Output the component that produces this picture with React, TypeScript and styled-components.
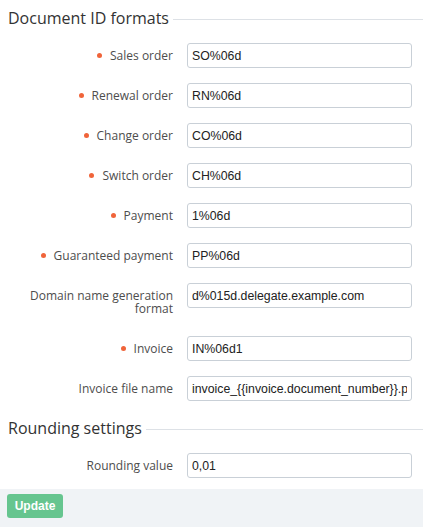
import * as React from "react";
import styled, {createGlobalStyle} from "styled-components";

const GlobalStyle = createGlobalStyle`
    html, body {
      margin: 0;
      padding: 0;
      background: #fff;
    }
    body {
      font-family: "Open Sans", "Liberation Sans", sans-serif;
    }
`;

const Page = styled.div`
    width: 423px;
    min-height: 527px;
    display: flex;
    flex-direction: column;
    background: #fff;
`;

const Content = styled.div`
    padding: 8px 11px 11px 8px;
`;

const Section = styled.section<{ first?: boolean }>`
    margin-top: ${p => p.first ? 0 : 17}px;
`;

const SectionTitle = styled.div`
    display: flex;
    align-items: center;
    height: 20px;
    margin-bottom: 15px;
    margin-right: -11px;
    font-size: 16px;
    color: #333;
    white-space: nowrap;
    &::after {
      content: "";
      flex: 1;
      height: 1px;
      margin-left: 4px;
      margin-top: 3px;
      background: #dde1e6;
    }
`;

const Form = styled.div`
    display: grid;
    grid-template-columns: 165px 225px;
    column-gap: 14px;
    row-gap: 15px;
`;

const Label = styled.label<{ required?: boolean }>`
    padding: 6px 0;
    font-size: 12px;
    line-height: 13px;
    color: #4d4d4d;
    text-align: right;
    &::before {
      content: "";
      display: ${p => p.required ? "inline-block" : "none"};
      width: 5px;
      height: 5px;
      margin-right: 8px;
      vertical-align: 2px;
      border-radius: 50%;
      background: #f0643a;
    }
`;

const Input = styled.input`
    display: block;
    box-sizing: border-box;
    width: 225px;
    height: 25px;
    padding: 0 4px;
    border: 1px solid #c9d0d7;
    border-radius: 3px;
    font-family: "Liberation Sans", Arial, sans-serif;
    font-size: 12.3px;
    color: #222;
    background: #fff;
    outline: none;
`;

const Footer = styled.div`
    flex: 1;
    padding: 5px 7px;
    background: #f0f3f6;
`;

const Button = styled.button`
    display: block;
    width: 56px;
    height: 24px;
    padding: 0;
    border: none;
    border-radius: 3px;
    background: #66c58f;
    color: #fff;
    font-family: "Liberation Sans", Arial, sans-serif;
    font-size: 12px;
    font-weight: bold;
`;

interface Field {
  label: string;
  value: string;
  required?: boolean;
}

const idFormats: Field[] = [
  {label: "Sales order", value: "SO%06d", required: true},
  {label: "Renewal order", value: "RN%06d", required: true},
  {label: "Change order", value: "CO%06d", required: true},
  {label: "Switch order", value: "CH%06d", required: true},
  {label: "Payment", value: "1%06d", required: true},
  {label: "Guaranteed payment", value: "PP%06d", required: true},
  {label: "Domain name generation format", value: "d%015d.delegate.example.com"},
  {label: "Invoice", value: "IN%06d1", required: true},
  {label: "Invoice file name", value: "invoice_{{invoice.document_number}}.pdf"},
];

const rounding: Field[] = [
  {label: "Rounding value", value: "0,01"},
];

const Fields = ({items}: { items: Field[] }) => (
  <Form>
    {items.map(f => (
      <React.Fragment key={f.label}>
        <Label required={f.required}>{f.label}</Label>
        <div><Input defaultValue={f.value}/></div>
      </React.Fragment>
    ))}
  </Form>
);

export default function App() {
  return (
    <Page>
      <GlobalStyle/>
      <Content>
        <Section first>
          <SectionTitle>Document ID formats</SectionTitle>
          <Fields items={idFormats}/>
        </Section>
        <Section>
          <SectionTitle>Rounding settings</SectionTitle>
          <Fields items={rounding}/>
        </Section>
      </Content>
      <Footer>
        <Button>Update</Button>
      </Footer>
    </Page>
  );
}
